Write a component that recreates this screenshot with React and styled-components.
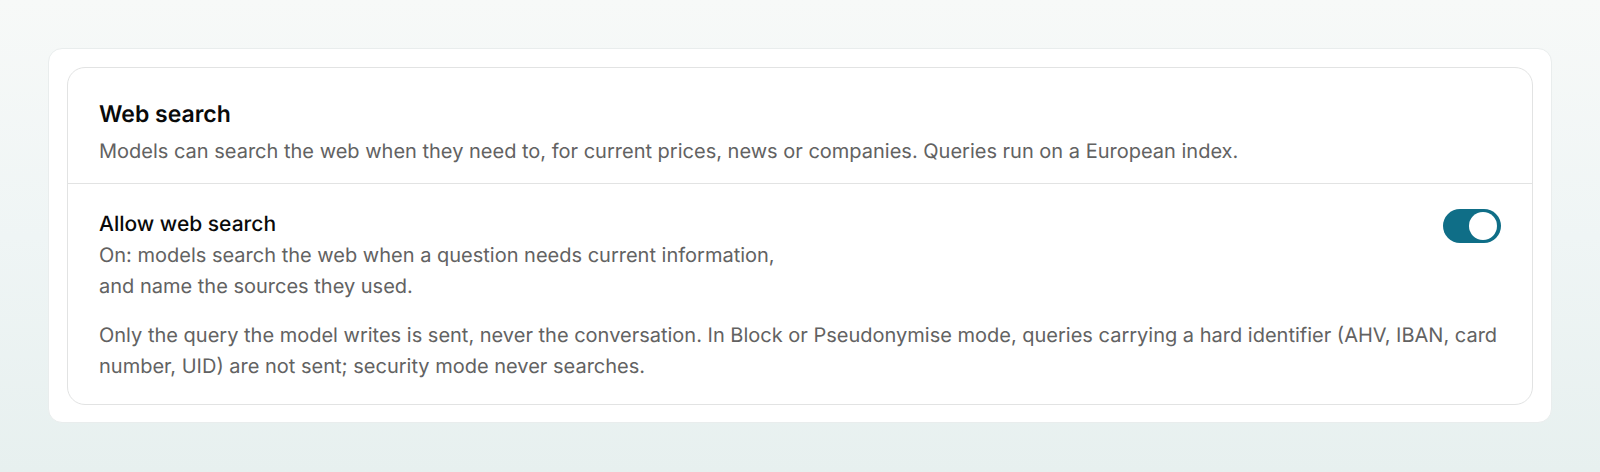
import React, { useState } from 'react'
import styled, { createGlobalStyle } from 'styled-components';

const App = () => {
	const [allowed, setAllowed] = useState(true);

	return (
		<>
			<GlobalStyle />
			<Page>
				<Frame>
					<Card>
						<CardHeader>
							<CardTitle>Web search</CardTitle>
							<Text>
								Models can search the web when they need to, for current prices,
								news or companies. Queries run on a European index.
							</Text>
						</CardHeader>
						<CardBody>
							<SettingRow>
								<div>
									<SettingLabel htmlFor="allow-web-search">Allow web search</SettingLabel>
									<Text id="allow-web-search-hint">
										On: models search the web when a question needs current information,
										<br />
										and name the sources they used.
									</Text>
								</div>
								<Switch
									id="allow-web-search"
									type="checkbox"
									role="switch"
									aria-describedby="allow-web-search-hint"
									checked={allowed}
									onChange={(e) => setAllowed(e.target.checked)}
								/>
							</SettingRow>
							<Text>
								Only the query the model writes is sent, never the conversation. In
								Block or Pseudonymise mode, queries carrying a hard identifier (AHV,
								IBAN, card number, UID) are not sent; security mode never searches.
							</Text>
						</CardBody>
					</Card>
				</Frame>
			</Page>
		</>
	);
}

export default App


const GlobalStyle = createGlobalStyle`
	* {
		box-sizing: border-box;
	}

	body {
		margin: 0;
		background: #e7f0ef;
		color: #0a0a0a;
		font-family: Inter, "Liberation Sans", sans-serif;
		text-rendering: geometricPrecision;
	}
`;

const Page = styled.main`
	padding: 48px;
	min-height: 100vh;
	background: linear-gradient(#f7f9f8, #eff5f5 50%, #e7f0ef);
`;

const Frame = styled.div`
	padding: 18px 18px 17px;
	background: #fff;
	border: 1px solid #e9eded;
	border-radius: 14px;
`;

const Card = styled.section`
	border: 1px solid #e2e3e3;
	border-radius: 18px;
`;

const CardHeader = styled.header`
	padding: 29px 31px 16px;
	border-bottom: 1px solid #e2e3e3;
`;

const CardTitle = styled.h2`
	margin: 0 0 5px;
	font-size: 23px;
	line-height: 34px;
	font-weight: 600;
`;

const Text = styled.p`
	margin: 0;
	color: #626262;
	font-size: 20px;
	line-height: 31px;
`;

const CardBody = styled.div`
	display: flex;
	flex-direction: column;
	gap: 18px;
	padding: 25px 31px 22px;
`;

const SettingRow = styled.div`
	display: flex;
	align-items: flex-start;
	justify-content: space-between;
	gap: 24px;
`;

const SettingLabel = styled.label`
	display: block;
	font-size: 21px;
	line-height: 31px;
	font-weight: 500;
`;

const Switch = styled.input`
	appearance: none;
	flex: none;
	display: flex;
	align-items: center;
	width: 58px;
	height: 34px;
	margin: 0;
	padding: 3px 4px;
	border-radius: 17px;
	background: #b8c4c6;
	cursor: pointer;

	&::before {
		content: '';
		width: 28px;
		height: 28px;
		border-radius: 50%;
		background: #fff;
	}

	&:checked {
		justify-content: flex-end;
		background: #0f6e87;
	}

	&:focus-visible {
		outline: 2px solid #0f6e87;
		outline-offset: 2px;
	}
`;
